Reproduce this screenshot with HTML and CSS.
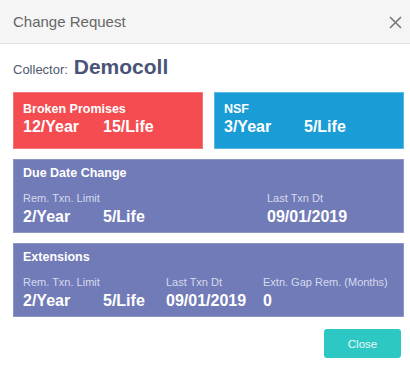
FILE: index.html
```html
<!DOCTYPE html>
<html lang="en">
<head>
    <meta charset="UTF-8">
    <meta name="viewport" content="width=device-width, initial-scale=1.0">
    <title>Change Request</title>
    <link rel="stylesheet" href="styles.css">
</head>
<body>
    <div class="modal">
        <div class="modal-header">
            <span class="modal-title">Change Request</span>
            <span class="close-x">
                <svg width="13" height="13" viewBox="0 0 13 13">
                    <path d="M1 1 L12 12 M12 1 L1 12" stroke="#777" stroke-width="1.6" fill="none"/>
                </svg>
            </span>
        </div>
        <div class="modal-body">
            <p class="collector"><span class="collector-label">Collector:</span> <strong>Democoll</strong></p>

            <div class="row-two">
                <div class="card red">
                    <div class="card-title">Broken Promises</div>
                    <div class="values">
                        <span class="year">12/Year</span>
                        <span>15/Life</span>
                    </div>
                </div>
                <div class="card blue">
                    <div class="card-title">NSF</div>
                    <div class="values">
                        <span class="year">3/Year</span>
                        <span>5/Life</span>
                    </div>
                </div>
            </div>

            <div class="card purple">
                <div class="card-title">Due Date Change</div>
                <div class="groups">
                    <div class="group due-limit">
                        <div class="label">Rem. Txn. Limit</div>
                        <div class="values">
                            <span class="year">2/Year</span>
                            <span>5/Life</span>
                        </div>
                    </div>
                    <div class="group">
                        <div class="label">Last Txn Dt</div>
                        <div class="values">09/01/2019</div>
                    </div>
                </div>
            </div>

            <div class="card purple">
                <div class="card-title">Extensions</div>
                <div class="groups">
                    <div class="group ext-limit">
                        <div class="label">Rem. Txn. Limit</div>
                        <div class="values">
                            <span class="year">2/Year</span>
                            <span>5/Life</span>
                        </div>
                    </div>
                    <div class="group ext-date">
                        <div class="label">Last Txn Dt</div>
                        <div class="values">09/01/2019</div>
                    </div>
                    <div class="group">
                        <div class="label">Extn. Gap Rem. (Months)</div>
                        <div class="values">0</div>
                    </div>
                </div>
            </div>

            <div class="footer">
                <button class="btn-close">Close</button>
            </div>
        </div>
    </div>
</body>
</html>
```

FILE: styles.css
```css
body {
    font-family: "Liberation Sans", Arial, sans-serif;
    background-color: white;
    margin: 0;
}

.modal {
    width: 410px;
    height: 366px;
    background-color: white;
}

.modal-header {
    display: flex;
    justify-content: space-between;
    align-items: center;
    height: 43px;
    padding: 0 8px 0 13px;
    background-color: #f5f5f5;
    border-bottom: 1px solid #e2e2e2;
    box-sizing: content-box;
}

.modal-title {
    font-size: 15px;
    line-height: 20px;
    color: #666;
    padding-top: 1px;
}

.close-x {
    display: flex;
    margin-top: 1px;
}

.modal-body {
    padding: 0 6px 0 13px;
}

.collector {
    margin: 11px 0 13px;
    font-size: 21px;
    line-height: 24px;
    color: #4a5478;
}

.collector-label {
    font-size: 13px;
    line-height: 1;
    color: #50576f;
}

.row-two {
    display: grid;
    grid-template-columns: 1fr 1fr;
    gap: 11px;
    margin-bottom: 10px;
}

.card {
    color: white;
    font-weight: bold;
    padding: 9px 10px 12px;
}

.card.red {
    background-color: #f44c51;
    box-shadow: inset 0 0 0 1px #f6777a;
}

.card.blue {
    background-color: #1a9cd7;
    box-shadow: inset 0 0 0 1px #5bb9e4;
}

.card.purple {
    background-color: #717bb8;
    box-shadow: inset 0 0 0 1px #8d95c7;
    padding: 6px 10px 6px;
    margin-bottom: 10px;
}

.card-title {
    font-size: 12.5px;
    line-height: 16px;
}

.purple .card-title {
    margin-bottom: 10px;
}

.values {
    font-size: 16px;
    line-height: 20px;
    display: flex;
}

.values .year {
    width: 80px;
}

.groups {
    display: flex;
}

.label {
    font-size: 11px;
    line-height: 14px;
    font-weight: normal;
    color: #d6d9ee;
    margin-bottom: 2px;
}

.due-limit {
    width: 244px;
}

.ext-limit {
    width: 143px;
}

.ext-date {
    width: 97px;
}

.footer {
    display: flex;
    justify-content: flex-end;
    padding-top: 2px;
    padding-right: 3px;
}

.btn-close {
    width: 77px;
    height: 29px;
    border: none;
    border-radius: 3px;
    background-color: #2ec8c4;
    color: #eafaf9;
    font-family: "Liberation Sans", Arial, sans-serif;
    font-size: 11.5px;
    cursor: pointer;
}
```
